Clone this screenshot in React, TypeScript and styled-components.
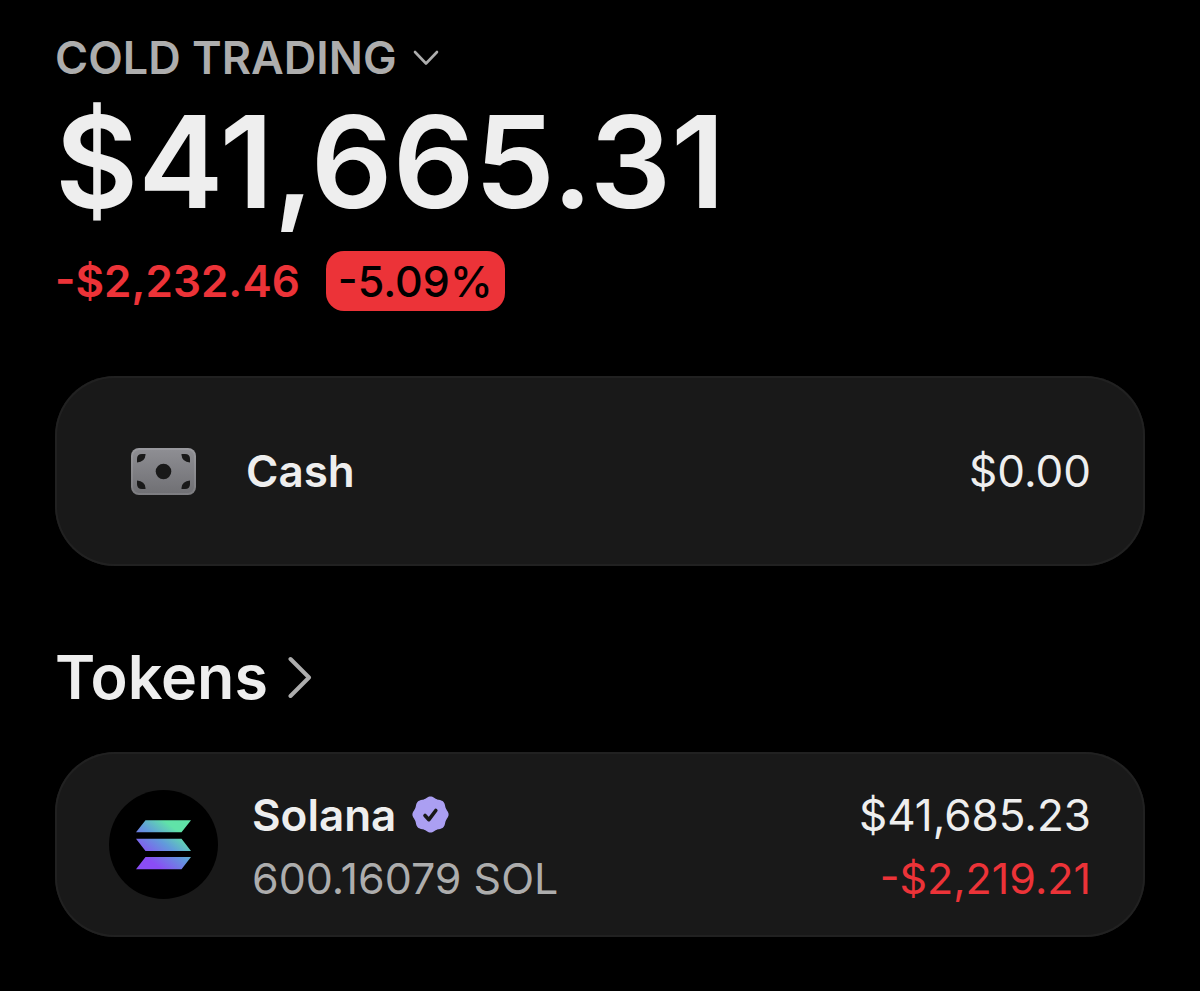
import React from "react";
import styled, { createGlobalStyle } from "styled-components";

const GlobalStyle = createGlobalStyle`
  * { box-sizing: border-box; }
  body { margin: 0; background: #000; color: #eee; font-family: Inter, "Liberation Sans", sans-serif; }
  button { margin: 0; padding: 0; border: 0; background: none; font: inherit; color: inherit; text-align: left; cursor: pointer; }
  h1, h2, p { margin: 0; font-weight: inherit; }
`;

const Page = styled.main`
  padding: 32px 55px 54px;
`;

const AccountButton = styled.button`
  && { color: #adadad; font-size: 45px; font-weight: 600; line-height: 52px; }
  display: flex;
  align-items: center;
  gap: 16px;
`;

const Balance = styled.h1`
  && { font-weight: 600; }
  font-size: 128px;
  line-height: 156px;
`;

const ChangeRow = styled.div`
  display: flex;
  align-items: center;
  gap: 26px;
  margin-top: 11px;
  line-height: 60px;
`;

const Loss = styled.span`
  color: #ec3338;
  font-size: 44px;
  font-weight: 600;
`;

const LossBadge = styled.span`
  padding: 0 12px;
  border-radius: 18px;
  background: #ec3338;
  color: #000;
  font-size: 43px;
  font-weight: 500;
`;

const Card = styled.button<{ $tall?: boolean }>`
  && { padding: 0 54px; }
  display: flex;
  align-items: center;
  width: 100%;
  height: ${(p) => (p.$tall ? 190 : 185)}px;
  border-radius: 60px;
  background: #191919;
  box-shadow: inset 0 0 0 2px #212121;
`;

const IconSlot = styled.span`
  display: grid;
  place-items: center;
  flex: none;
  width: 109px;
  height: 109px;
`;

const SectionButton = styled.button`
  && { font-size: 61px; font-weight: 600; line-height: 80px; }
  display: flex;
  align-items: center;
  gap: 20px;
`;

const Section = styled.h2`
  && { margin: 71px 0 35px; }
`;

const Cards = styled.section`
  margin-top: 65px;
`;

const Label = styled.span`
  display: flex;
  flex-direction: column;
  margin-left: 28px;
`;

const Amount = styled.span`
  display: flex;
  flex-direction: column;
  align-items: flex-end;
  margin-left: auto;
`;

const TokenLabel = styled(Label)`
  gap: 3px;
  margin-left: 34px;
  padding-top: 3px;
`;

const TokenAmount = styled(Amount)`
  gap: 3px;
  padding-top: 3px;
`;

const Name = styled.span`
  display: flex;
  align-items: center;
  gap: 16px;
  font-size: 44px;
  font-weight: 600;
  line-height: 60px;
`;

const Value = styled.span`
  font-size: 44px;
  line-height: 60px;
`;

const Detail = styled.span<{ $loss?: boolean }>`
  color: ${(p) => (p.$loss ? "#ec3338" : "#adadad")};
  font-size: 43px;
  line-height: 60px;
`;

const DownChevron = () => (
  <svg width="26" height="16" viewBox="0 0 26 16" fill="none" stroke="#adadad" strokeWidth="2.6" strokeLinecap="round" strokeLinejoin="round">
    <path d="M2 2l11 11.500L24 2" />
  </svg>
);

const RightChevron = () => (
  <svg width="24" height="42" viewBox="0 0 24 42" fill="none" stroke="#adadad" strokeWidth="4" strokeLinecap="round" strokeLinejoin="round">
    <path d="M2.500 3l18.500 18.500L2.500 40" />
  </svg>
);

const CashIcon = () => (
  <svg width="65" height="47" viewBox="0 0 65 47">
    <defs>
      <linearGradient id="cash" x1="0" y1="0" x2="0" y2="1">
        <stop stopColor="#8f8f94" />
        <stop offset="1" stopColor="#6f6f73" />
      </linearGradient>
      <path id="leaf" d="M6 14.500V11Q6 6 11 6h3.500v1Q14 14 6 14.500z" />
    </defs>
    <rect width="65" height="47" rx="8" fill="url(#cash)" />
    <rect x="1" y="1" width="63" height="45" rx="7" fill="none" stroke="#fff" strokeOpacity=".1" strokeWidth="2" />
    <g fill="#191919">
      <circle cx="32.500" cy="23.500" r="7.800" />
      <use href="#leaf" />
      <use href="#leaf" transform="matrix(-1 0 0 1 65 0)" />
      <use href="#leaf" transform="matrix(1 0 0 -1 0 47)" />
      <use href="#leaf" transform="matrix(-1 0 0 -1 65 47)" />
    </g>
  </svg>
);

const SolanaIcon = () => (
  <svg width="109" height="109" viewBox="0 0 109 109">
    <defs>
      <linearGradient id="solana" gradientUnits="userSpaceOnUse" x1="33" y1="82" x2="76" y2="27">
        <stop offset=".2" stopColor="#8a4df5" />
        <stop offset=".52" stopColor="#619bdb" />
        <stop offset=".78" stopColor="#60e3a8" />
      </linearGradient>
    </defs>
    <circle cx="54.500" cy="54.500" r="54.500" fill="#000" />
    <path fill="url(#solana)" d="M36.500 30.200H82L72.500 42.300H27zM27 48.800H72.500L82 60.900H36.500zM36.500 67H82L72.500 79.200H27z" />
  </svg>
);

const sealPoints = Array.from({ length: 120 }, (_, i) => {
  const angle = (i * Math.PI) / 60;
  const radius = 17.3 + 0.8 * Math.cos(8 * angle);
  return `${(18.5 + radius * Math.cos(angle)).toFixed(2)},${(18.5 + radius * Math.sin(angle)).toFixed(2)}`;
}).join(" ");

const VerifiedIcon = () => (
  <svg width="38" height="38" viewBox="0 0 38 38">
    <polygon points={sealPoints} fill="#ab9ff2" />
    <path d="M13 19.500l3.900 4.200 6.900-9.200" fill="none" stroke="#191919" strokeWidth="3.6" strokeLinecap="round" strokeLinejoin="round" />
  </svg>
);

export default function App() {
  return (
    <>
      <GlobalStyle />
      <Page>
        <AccountButton>COLD TRADING<DownChevron /></AccountButton>
        <Balance>$41,665.31</Balance>
        <ChangeRow>
          <Loss>-$2,232.46</Loss>
          <LossBadge>-5.09%</LossBadge>
        </ChangeRow>
        <Cards>
          <Card $tall>
            <IconSlot><CashIcon /></IconSlot>
            <Label><Name>Cash</Name></Label>
            <Amount><Value>$0.00</Value></Amount>
          </Card>
        </Cards>
        <Section><SectionButton>Tokens<RightChevron /></SectionButton></Section>
        <Card>
          <IconSlot><SolanaIcon /></IconSlot>
          <TokenLabel>
            <Name>Solana<VerifiedIcon /></Name>
            <Detail>600.16079 SOL</Detail>
          </TokenLabel>
          <TokenAmount>
            <Value>$41,685.23</Value>
            <Detail $loss>-$2,219.21</Detail>
          </TokenAmount>
        </Card>
      </Page>
    </>
  );
}
